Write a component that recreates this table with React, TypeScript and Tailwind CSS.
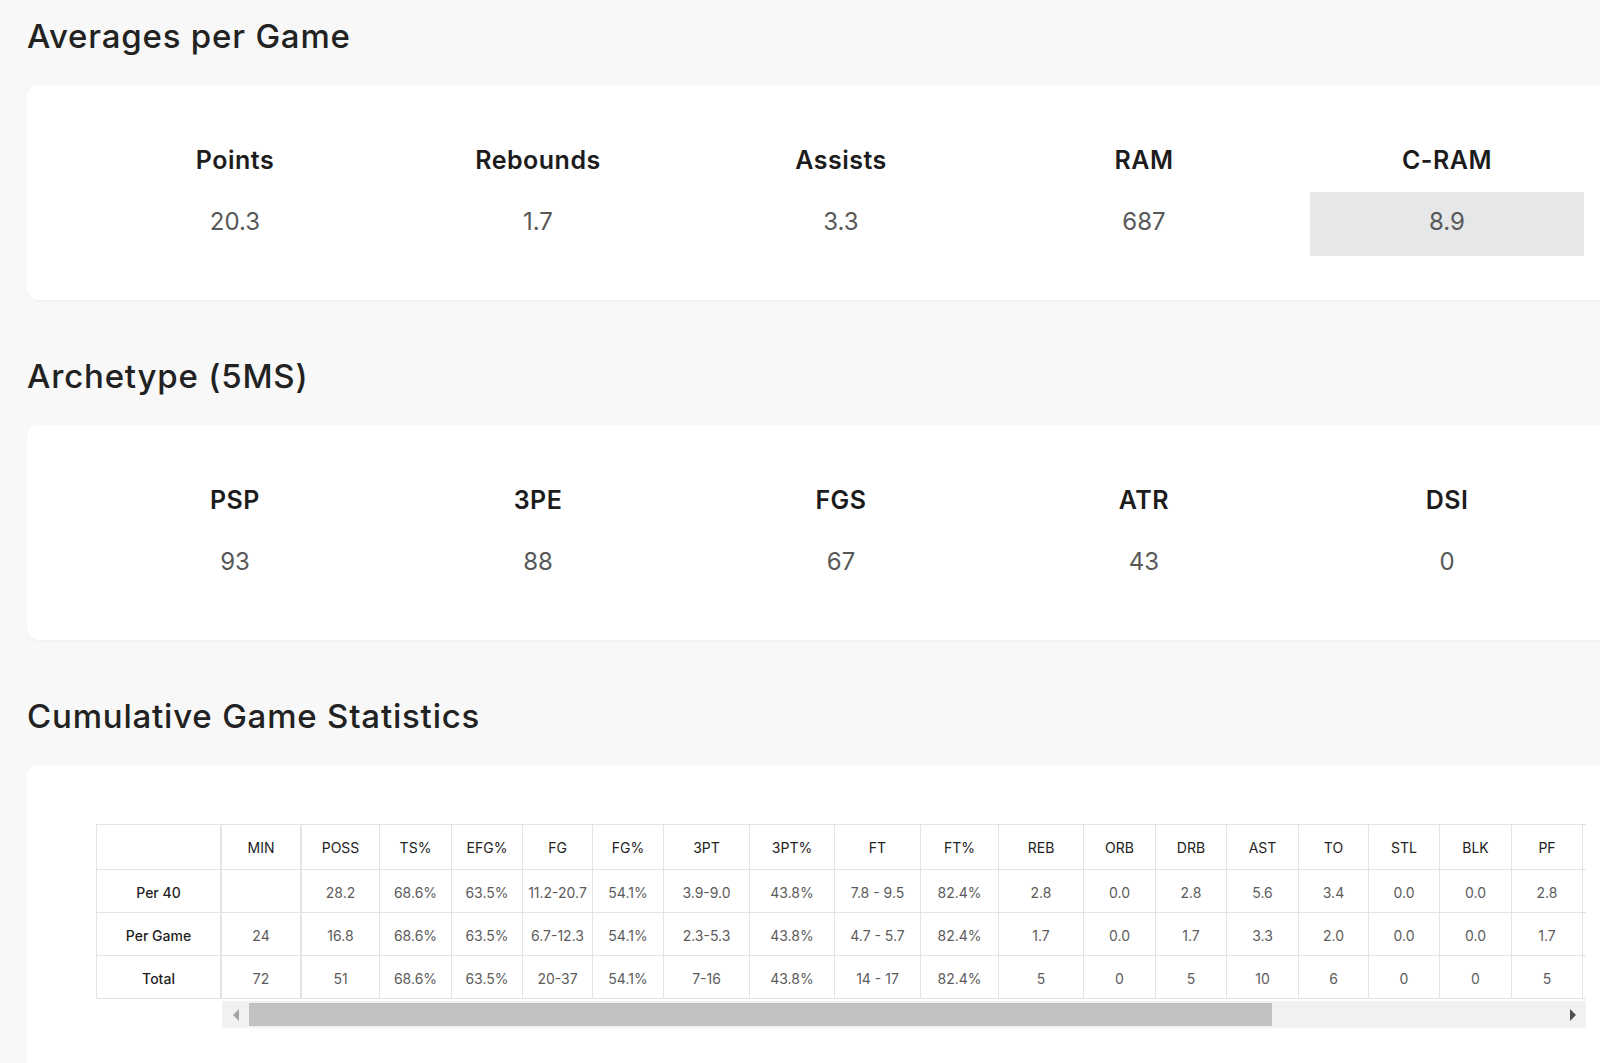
import React from 'react';

const averages = [
  { label: 'Points', value: '20.3' },
  { label: 'Rebounds', value: '1.7' },
  { label: 'Assists', value: '3.3' },
  { label: 'RAM', value: '687' },
  { label: 'C-RAM', value: '8.9', highlight: true },
];

const archetype = [
  { label: 'PSP', value: '93' },
  { label: '3PE', value: '88' },
  { label: 'FGS', value: '67' },
  { label: 'ATR', value: '43' },
  { label: 'DSI', value: '0' },
];

// column name + pixel width; the last ones sit past the scroll edge
const columns: [string, string][] = [
  ['MIN', 'w-[80px]'],
  ['POSS', 'w-[78px]'],
  ['TS%', 'w-[72px]'],
  ['EFG%', 'w-[71px]'],
  ['FG', 'w-[70px]'],
  ['FG%', 'w-[71px]'],
  ['3PT', 'w-[86px]'],
  ['3PT%', 'w-[85px]'],
  ['FT', 'w-[86px]'],
  ['FT%', 'w-[78px]'],
  ['REB', 'w-[85px]'],
  ['ORB', 'w-[72px]'],
  ['DRB', 'w-[71px]'],
  ['AST', 'w-[72px]'],
  ['TO', 'w-[70px]'],
  ['STL', 'w-[71px]'],
  ['BLK', 'w-[72px]'],
  ['PF', 'w-[71px]'],
  ['', 'w-[78px]'],
  ['', 'w-[72px]'],
  ['', 'w-[70px]'],
];

const rows = [
  { name: 'Per 40', values: ['', '28.2', '68.6%', '63.5%', '11.2-20.7', '54.1%', '3.9-9.0', '43.8%', '7.8 - 9.5', '82.4%', '2.8', '0.0', '2.8', '5.6', '3.4', '0.0', '0.0', '2.8'] },
  { name: 'Per Game', values: ['24', '16.8', '68.6%', '63.5%', '6.7-12.3', '54.1%', '2.3-5.3', '43.8%', '4.7 - 5.7', '82.4%', '1.7', '0.0', '1.7', '3.3', '2.0', '0.0', '0.0', '1.7'] },
  { name: 'Total', values: ['72', '51', '68.6%', '63.5%', '20-37', '54.1%', '7-16', '43.8%', '14 - 17', '82.4%', '5', '0', '5', '10', '6', '0', '0', '5'] },
];

function Heading({ children }: { children: React.ReactNode }) {
  return (
    <h2 className="pt-[17px] text-[33px] leading-[38px] font-medium tracking-[0.8px] text-[#222]">{children}</h2>
  );
}

function StatCard({ items }: { items: { label: string; value: string; highlight?: boolean }[] }) {
  return (
    <div className="mt-[30px] w-[1640px] rounded-[12px] bg-white pt-[59px] pb-[44px] pl-[71px] shadow-[0_1px_3px_rgba(0,0,0,0.04)]">
      <div className="grid grid-cols-[repeat(5,274px)] gap-x-[29px]">
        {items.map((it) => (
          <div key={it.label} className="flex flex-col items-center">
            <div className="h-[32px] text-[25px] leading-[32px] font-semibold tracking-[0.5px] text-[#1c1c1c]">
              {it.label}
            </div>
            <div
              className={
                'mt-[16px] flex h-[64px] w-full items-center justify-center pb-[4px] text-[24px] text-[#585858] ' +
                (it.highlight ? 'bg-[#e6e7e9]' : '')
              }
            >
              {it.value}
            </div>
          </div>
        ))}
      </div>
    </div>
  );
}

function CumulativeTable() {
  return (
    <div className="mt-[30px] w-[1640px] rounded-[12px] bg-white pt-[59px] pl-[69px] pb-[60px]">
      <div className="flex text-[14px]">
        <div className="w-[126px] shrink-0">
          <div className="h-[46px] border-l border-t border-b border-r-2 border-[#e4e4e4]" />
          {rows.map((r) => (
            <div
              key={r.name}
              className="flex h-[43px] items-center justify-center border-l border-b border-r-2 border-[#e4e4e4] pt-[3px] font-medium text-[#1f1f1f]"
            >
              {r.name}
            </div>
          ))}
        </div>
        <div className="w-[1364px] shrink-0">
          <div className="overflow-hidden">
            <div className="w-max">
              <div className="flex">
                {columns.map(([c, w], i) => (
                  <div
                    key={i}
                    className={
                      w +
                      ' flex h-[46px] shrink-0 items-center justify-center border-t border-b border-[#e4e4e4] text-[#222] ' +
                      (i === 0 ? 'border-r-2' : 'border-r')
                    }
                  >
                    {c}
                  </div>
                ))}
              </div>
              {rows.map((r) => (
                <div key={r.name} className="flex">
                  {columns.map(([, w], i) => (
                    <div
                      key={i}
                      className={
                        w +
                        ' flex h-[43px] shrink-0 items-center justify-center border-b border-[#e4e4e4] pt-[3px] text-[#5c5c5c] ' +
                        (i === 0 ? 'border-r-2' : 'border-r')
                      }
                    >
                      {r.values[i] ?? ''}
                    </div>
                  ))}
                </div>
              ))}
            </div>
          </div>
          {/* horizontal scrollbar */}
          <div className="mt-[2px] flex h-[27px] items-center bg-[#f1f1f1]">
            <div className="flex w-[27px] shrink-0 items-center justify-center">
              <div className="h-0 w-0 border-y-[6px] border-r-[6px] border-y-transparent border-r-[#a3a3a3]" />
            </div>
            <div className="h-[23px] w-[1023px] bg-[#c1c1c1]" />
            <div className="flex-1" />
            <div className="flex w-[27px] shrink-0 items-center justify-center">
              <div className="h-0 w-0 border-y-[6px] border-l-[6px] border-y-transparent border-l-[#505050]" />
            </div>
          </div>
        </div>
      </div>
    </div>
  );
}

export default function App() {
  return (
    <div className="min-h-screen overflow-hidden bg-[#f8f8f8] font-['Inter',sans-serif]">
      <div className="pl-[27px]">
        <Heading>Averages per Game</Heading>
        <StatCard items={averages} />
        <div className="pt-[40px]">
          <Heading>Archetype (5MS)</Heading>
          <StatCard items={archetype} />
        </div>
        <div className="pt-[40px]">
          <Heading>Cumulative Game Statistics</Heading>
          <CumulativeTable />
        </div>
      </div>
    </div>
  );
}
